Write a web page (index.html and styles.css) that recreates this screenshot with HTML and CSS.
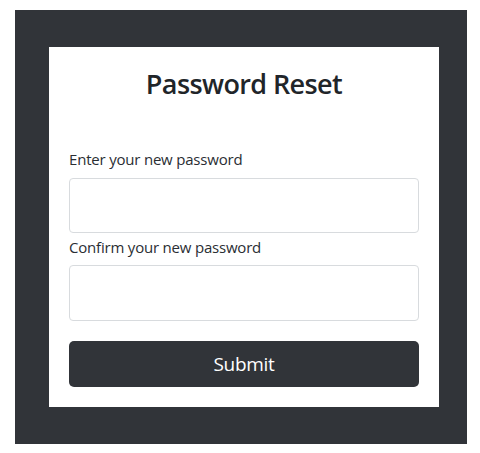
FILE: index.html
```html
<!DOCTYPE html>
<html lang="en">
<head>
<meta charset="utf-8">
<title>Password Reset</title>
<link rel="stylesheet" href="styles.css">
</head>
<body>
  <div class="panel">
    <form class="card">
      <h1 class="title">Password Reset</h1>
      <label class="label label-first" for="pw1">Enter your new password</label>
      <input class="field" id="pw1" type="password">
      <label class="label label-second" for="pw2">Confirm your new password</label>
      <input class="field field-second" id="pw2" type="password">
      <button class="submit" type="button">Submit</button>
    </form>
  </div>
</body>
</html>
```

FILE: styles.css
```css
html, body {
  margin: 0;
  background: #ffffff;
}
body {
  padding: 10px 13px 9px 15px;
  font-family: "Open Sans", "Noto Sans", sans-serif;
  color: #212529;
}
.panel {
  background: #313439;
  padding: 37px 28px 37px 34px;
}
.card {
  background: #ffffff;
  padding: 20px;
  display: flex;
  flex-direction: column;
  margin: 0;
}
.title {
  margin: 0;
  font-size: 27px;
  line-height: 34px;
  font-weight: 600;
  letter-spacing: -0.6px;
  text-align: center;
  color: #212529;
}
.label {
  display: block;
  font-size: 15px;
  line-height: 24px;
  letter-spacing: -0.2px;
  color: #2a2e33;
}
.label-first {
  margin-top: 46px;
  margin-bottom: 7px;
}
.label-second {
  margin-top: 2px;
  margin-bottom: 6px;
}
.field {
  box-sizing: border-box;
  height: 55px;
  width: 100%;
  margin: 0;
  border: 1px solid #d8dbde;
  border-radius: 4px;
  background: #ffffff;
}
.field-second {
  height: 56px;
}
.submit {
  margin-top: 20px;
  height: 46px;
  border: none;
  border-radius: 5px;
  background: #313439;
  color: #ffffff;
  font-family: "Open Sans", "Noto Sans", sans-serif;
  font-size: 19px;
  font-weight: 500;
  letter-spacing: -0.3px;
}
```
